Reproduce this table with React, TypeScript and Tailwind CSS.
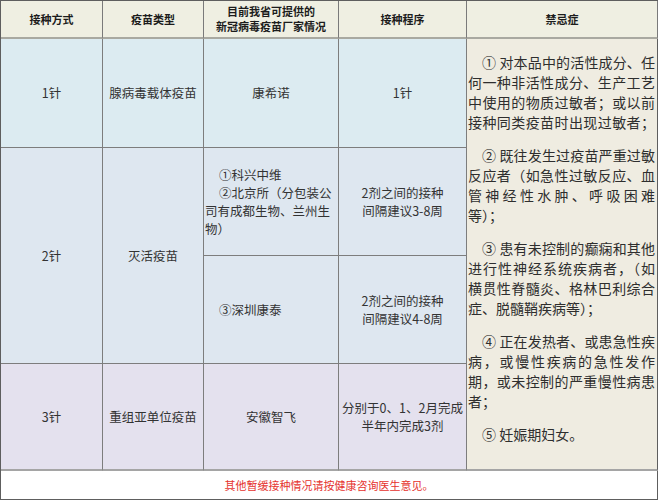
const font = { fontFamily: '"Noto Sans CJK SC", "Noto Sans", sans-serif' };

const headerCell =
    'flex items-center justify-center text-center bg-[#efefe2] border-r border-b-2 border-r-[#7a7a7a] border-b-[#a9a9a1] text-[11px] leading-[15px] font-bold text-[#1c1c1c]';
const bodyCell =
    'flex items-center justify-center text-center border-r border-b border-[#7d7d7d] text-[12.5px] leading-[18px] text-[#333]';

type Line = { text: string; full?: boolean };

const contraindications: Line[][] = [
    [
        { text: '① 对本品中的活性成分、任', full: true },
        { text: '何一种非活性成分、生产工艺', full: true },
        { text: '中使用的物质过敏者；或以前', full: true },
        { text: '接种同类疫苗时出现过敏者；', full: true },
    ],
    [
        { text: '② 既往发生过疫苗严重过敏', full: true },
        { text: '反应者（如急性过敏反应、血', full: true },
        { text: '管神经性水肿、呼吸困难', full: true },
        { text: '等）；' },
    ],
    [
        { text: '③ 患有未控制的癫痫和其他', full: true },
        { text: '进行性神经系统疾病者，（如', full: true },
        { text: '横贯性脊髓炎、格林巴利综合', full: true },
        { text: '症、脱髓鞘疾病等）；' },
    ],
    [
        { text: '④ 正在发热者、或患急性疾', full: true },
        { text: '病，或慢性疾病的急性发作', full: true },
        { text: '期，或未控制的严重慢性病患', full: true },
        { text: '者；' },
    ],
    [{ text: '⑤ 妊娠期妇女。' }],
];

export default function App() {
    return (
        <div className="w-[658px] h-[500px] bg-white" style={font}>
            <div className="grid grid-cols-[102px_101px_135px_128px_191px] grid-rows-[38px_109px_108px_108px_107px_29px] border-l border-t border-[#5e5e5e]">
                {/* header */}
                <div className={headerCell}>接种方式</div>
                <div className={headerCell}>疫苗类型</div>
                <div className={headerCell}>
                    目前我省可提供的
                    <br />
                    新冠病毒疫苗厂家情况
                </div>
                <div className={headerCell}>接种程序</div>
                <div className={`${headerCell} border-r-[#5e5e5e]`}>禁忌症</div>

                {/* 1针 */}
                <div className={`${bodyCell} bg-[#dcebf1]`}>1针</div>
                <div className={`${bodyCell} bg-[#dcebf1]`}>腺病毒载体疫苗</div>
                <div className={`${bodyCell} bg-[#dcebf1]`}>康希诺</div>
                <div className={`${bodyCell} bg-[#dcebf1]`}>1针</div>

                {/* 禁忌症 column */}
                <div className="row-span-4 bg-[#efece1] border-r border-b-2 border-r-[#5e5e5e] border-b-[#a5a5a5] pt-[13px] pl-px pr-[2px] text-[14px] leading-[20px] text-[#2e2e2e]">
                    {contraindications.map((para, i) => (
                        <div key={i} className={i > 0 ? 'mt-[13px]' : ''}>
                            {para.map((line, j) => (
                                <div
                                    key={j}
                                    className={`whitespace-nowrap ${j === 0 ? 'pl-[14px]' : ''} ${
                                        line.full ? 'text-justify [text-align-last:justify]' : ''
                                    }`}
                                >
                                    {line.text}
                                </div>
                            ))}
                        </div>
                    ))}
                </div>

                {/* 2针 */}
                <div className={`${bodyCell} row-span-2 bg-[#dee7f0]`}>2针</div>
                <div className={`${bodyCell} row-span-2 bg-[#dee7f0]`}>灭活疫苗</div>
                <div className={`${bodyCell} bg-[#dee7f0] !justify-start !text-left pl-px`}>
                    <div>
                        <div className="pl-[14px]">①科兴中维</div>
                        <div className="pl-[14px]">②北京所（分包装公</div>
                        <div>司有成都生物、兰州生</div>
                        <div>物）</div>
                    </div>
                </div>
                <div className={`${bodyCell} bg-[#dee7f0]`}>
                    2剂之间的接种
                    <br />
                    间隔建议3-8周
                </div>
                <div className={`${bodyCell} bg-[#dee7f0] !justify-start !text-left pl-[15px]`}>③深圳康泰</div>
                <div className={`${bodyCell} bg-[#dee7f0]`}>
                    2剂之间的接种
                    <br />
                    间隔建议4-8周
                </div>

                {/* 3针 */}
                <div className={`${bodyCell} bg-[#e4e1ee] border-b-2 border-b-[#a5a5a5]`}>3针</div>
                <div className={`${bodyCell} bg-[#e4e1ee] border-b-2 border-b-[#a5a5a5]`}>重组亚单位疫苗</div>
                <div className={`${bodyCell} bg-[#e4e1ee] border-b-2 border-b-[#a5a5a5]`}>安徽智飞</div>
                <div className={`${bodyCell} bg-[#e4e1ee] border-b-2 border-b-[#a5a5a5]`}>
                    分别于0、1、2月完成
                    <br />
                    半年内完成3剂
                </div>

                {/* footer */}
                <div className="col-span-5 flex items-center justify-center bg-white border-r border-b border-[#5e5e5e] text-[11px] text-[#e5322d]">
                    其他暂缓接种情况请按健康咨询医生意见。
                </div>
            </div>
        </div>
    );
}
